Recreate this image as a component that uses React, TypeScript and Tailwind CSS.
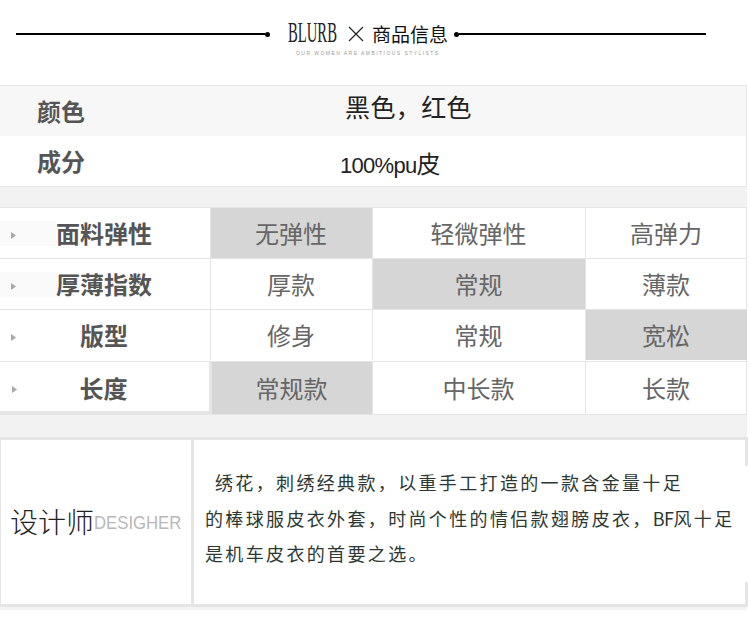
const cjk = "font-['Noto_Sans_CJK_SC','Liberation_Sans',sans-serif]";

const rows = [
  { label: '面料弹性', cells: ['无弹性', '轻微弹性', '高弹力'], active: 0, layout: 'h-[51px] grid-cols-[211px_162px_213px_161px]', shade: true },
  { label: '厚薄指数', cells: ['厚款', '常规', '薄款'], active: 1, layout: 'h-[51px] grid-cols-[211px_162px_213px_161px]', shade: true },
  { label: '版型', cells: ['修身', '常规', '宽松'], active: 2, layout: 'h-[52px] grid-cols-[211px_162px_213px_161px] pb-[1px]', shade: false },
  { label: '长度', cells: ['常规款', '中长款', '长款'], active: 0, layout: 'h-[52px] grid-cols-[212px_161px_213px_161px]', shade: false },
];

function Arrow() {
  return (
    <svg width="5" height="7" viewBox="0 0 5 7" className="relative shrink-0">
      <path d="M0 0 L5 3.5 L0 7 Z" fill="#a8a8a8" />
    </svg>
  );
}

function Header() {
  return (
    <div className="flex h-[85px] items-start px-4 pt-[33px]">
      <div className="h-[2px] w-[249px] bg-black" />
      <div className="-mt-[1px] h-[5px] w-[5px] rounded-full bg-black" />
      <div className="-mt-[9px] flex w-[184px] flex-col items-start pl-[18px]">
        <div className="flex h-[19px] items-center">
          <span className="inline-block w-[49px] origin-left scale-x-[0.515] whitespace-nowrap font-['Liberation_Serif',serif] text-[28.5px] leading-none text-[#222]">
            BLURB
          </span>
          <svg width="16" height="16" viewBox="0 0 16 16" className="ml-[11px] mr-[8px]">
            <path d="M1 1 L15 15 M15 1 L1 15" stroke="#222" strokeWidth="1.2" fill="none" />
          </svg>
          <span className={`${cjk} whitespace-nowrap text-[19px] leading-none text-[#111]`}>商品信息</span>
        </div>
        <div className="ml-[8px] mt-[7px] whitespace-nowrap font-['Liberation_Sans',sans-serif] text-[5px] leading-[6px] tracking-[1.45px] text-[#999]">
          OUR WOMEN ARE AMBITIOUS STYLISTS
        </div>
      </div>
      <div className="-mt-[1px] h-[5px] w-[5px] rounded-full bg-black" />
      <div className="h-[2px] w-[247px] bg-black" />
    </div>
  );
}

function Basics() {
  return (
    <div className="w-[747px] border-y border-r border-[#e5e5e5]">
      <div className="flex h-[50px] bg-[#f7f7f7]">
        <div className="w-[340px] pl-[37px] pt-[6px] text-[24px] font-bold leading-[38px] text-[#555]">颜色</div>
        <div className="pl-[5px] text-[25px] leading-[40px] tracking-[0.4px] text-[#222]">黑色，红色</div>
      </div>
      <div className="flex h-[50px] bg-white">
        <div className="w-[340px] pl-[37px] pt-[6px] text-[24px] font-bold leading-[38px] text-[#555]">成分</div>
        <div className="pt-[7px] text-[24px] leading-[40px] text-[#222]">
          <span className="font-['Liberation_Sans',sans-serif] text-[22px] tracking-[-0.7px]">100%pu</span>皮
        </div>
      </div>
    </div>
  );
}

function Specs() {
  return (
    <div className="w-[747px] border-y border-r border-[#e5e5e5] bg-white">
      {rows.map((row, i) => (
        <div
          key={row.label}
          className={`grid ${row.layout} ${i < rows.length - 1 ? 'border-b border-[#e5e5e5]' : ''}`}
        >
          <div
            className={`relative flex items-center justify-center border-[#e5e5e5] pr-[2px] text-[24px] font-bold text-[#555] ${
              i === 3 ? 'border-r-[3px] border-b-[3px] pt-[2px]' : 'border-r'
            }`}
          >
            {row.shade && <div className="absolute left-0 top-[13px] h-[25px] w-[56px] bg-[#fafafa]" />}
            <div className={`absolute top-[24px] flex ${i === 3 ? 'left-[12px]' : 'left-[11px]'}`}>
              <Arrow />
            </div>
            <span className="relative">{row.label}</span>
          </div>
          {row.cells.map((cell, j) => (
            <div
              key={cell}
              className={`flex items-center justify-center pr-[1px] text-[24px] text-[#666] ${j < 2 ? 'border-r border-[#e5e5e5]' : ''} ${
                row.active === j ? 'bg-[#d6d6d6]' : ''
              }`}
            >
              {cell}
            </div>
          ))}
        </div>
      ))}
    </div>
  );
}

function Designer() {
  return (
    <div className="relative flex h-[170px] w-[748px] border-y-[3px] border-r-[3px] border-[#e5e5e5] bg-white">
      <div className="flex w-[194px] shrink-0 items-center whitespace-nowrap border-l border-r-[3px] border-[#e5e5e5] pb-[3px] pl-[9px]">
        <span className="text-[28px] font-light leading-none text-[#222]">设计师</span>
        <span className="mt-[3px] inline-block origin-left scale-x-[0.88] font-['Liberation_Sans',sans-serif] text-[19px] leading-none text-[#b8b8b8]">
          DESIGHER
        </span>
      </div>
      <div className="flex-1 pl-[11px] pt-[25px] text-[18px] leading-[35.5px] tracking-[2.35px] text-[#2c3833]">
        <p className="indent-[10px]">绣花，刺绣经典款，以重手工打造的一款含金量十足</p>
        <p className="whitespace-nowrap">
          的棒球服皮衣外套，时尚个性的情侣款翅膀皮衣，<span className="tracking-[-0.5px]">BF</span>风十足
        </p>
        <p>是机车皮衣的首要之选。</p>
      </div>
      <div className="absolute -right-[3px] top-[26px] h-[116px] w-[3px] bg-white" />
    </div>
  );
}

export default function App() {
  return (
    <div className={`h-[622px] w-[750px] overflow-hidden bg-white ${cjk}`}>
      <Header />
      <Basics />
      <div className="h-[20px] w-[747px] bg-[#f2f2f2]" />
      <Specs />
      <div className="h-[22px] w-[747px] bg-[#f2f2f2]" />
      <Designer />
      <div className="h-[3px] w-[747px] bg-[#f2f2f2]" />
    </div>
  );
}
